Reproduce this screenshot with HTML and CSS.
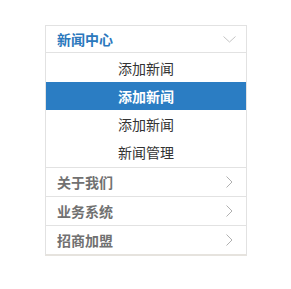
FILE: index.html
```html
<!DOCTYPE html>
<html>
<head>
  <title>新闻中心</title>
  <link rel="stylesheet" href="styles.css">
</head>
<body>
  <div class="side-menu">
    <div class="menu-group open">
      <div class="menu-title active">
        <span>新闻中心</span>
        <svg class="arrow-down" width="13" height="7" viewBox="0 0 13 7"><polyline points="0.5,0.5 6.5,6 12.5,0.5" fill="none" stroke="#c4c4c4" stroke-width="1"/></svg>
      </div>
      <ul class="sub-menu">
        <li><a href="#">添加新闻</a></li>
        <li class="current"><a href="#">添加新闻</a></li>
        <li><a href="#">添加新闻</a></li>
        <li><a href="#">新闻管理</a></li>
      </ul>
    </div>
    <div class="menu-title">
      <span>关于我们</span>
      <svg class="arrow-right" width="7" height="12" viewBox="0 0 7 12"><polyline points="0.5,0.5 6,6 0.5,11.5" fill="none" stroke="#b0b0b0" stroke-width="1"/></svg>
    </div>
    <div class="menu-title">
      <span>业务系统</span>
      <svg class="arrow-right" width="7" height="12" viewBox="0 0 7 12"><polyline points="0.5,0.5 6,6 0.5,11.5" fill="none" stroke="#b0b0b0" stroke-width="1"/></svg>
    </div>
    <div class="menu-title last">
      <span>招商加盟</span>
      <svg class="arrow-right" width="7" height="12" viewBox="0 0 7 12"><polyline points="0.5,0.5 6,6 0.5,11.5" fill="none" stroke="#b0b0b0" stroke-width="1"/></svg>
    </div>
  </div>
</body>
</html>
```

FILE: styles.css
```css
body {
  margin: 0;
  padding: 0;
  background-color: #fff;
  font-family: "Noto Sans CJK SC", "Liberation Sans", sans-serif;
}

.side-menu {
  width: 200px;
  margin: 25px 0 0 45px;
  border: 1px solid #e2e2e2;
  border-bottom: 2px solid #e6e3de;
}

.menu-title {
  display: flex;
  align-items: center;
  justify-content: space-between;
  height: 28px;
  padding: 0 10px 0 11px;
  border-top: 1px solid #e2e2e2;
  font-size: 14px;
  font-weight: bold;
  color: #717171;
}

.menu-group .menu-title {
  border-top: none;
  height: 26px;
  border-bottom: 1px solid #e2e2e2;
}

.menu-title.active {
  color: #2b78bd;
}

.arrow-right {
  margin-right: 3px;
}

.sub-menu {
  list-style-type: none;
  margin: 0;
  padding: 1px 0 1px 0;
}

.sub-menu li {
  height: 28px;
  line-height: 28px;
  text-align: center;
  font-size: 14px;
}

.sub-menu a {
  display: block;
  color: #333;
  text-decoration: none;
}

.sub-menu li.current {
  background-color: #2b7dc3;
}

.sub-menu li.current a {
  color: #fff;
  font-weight: bold;
}
```
